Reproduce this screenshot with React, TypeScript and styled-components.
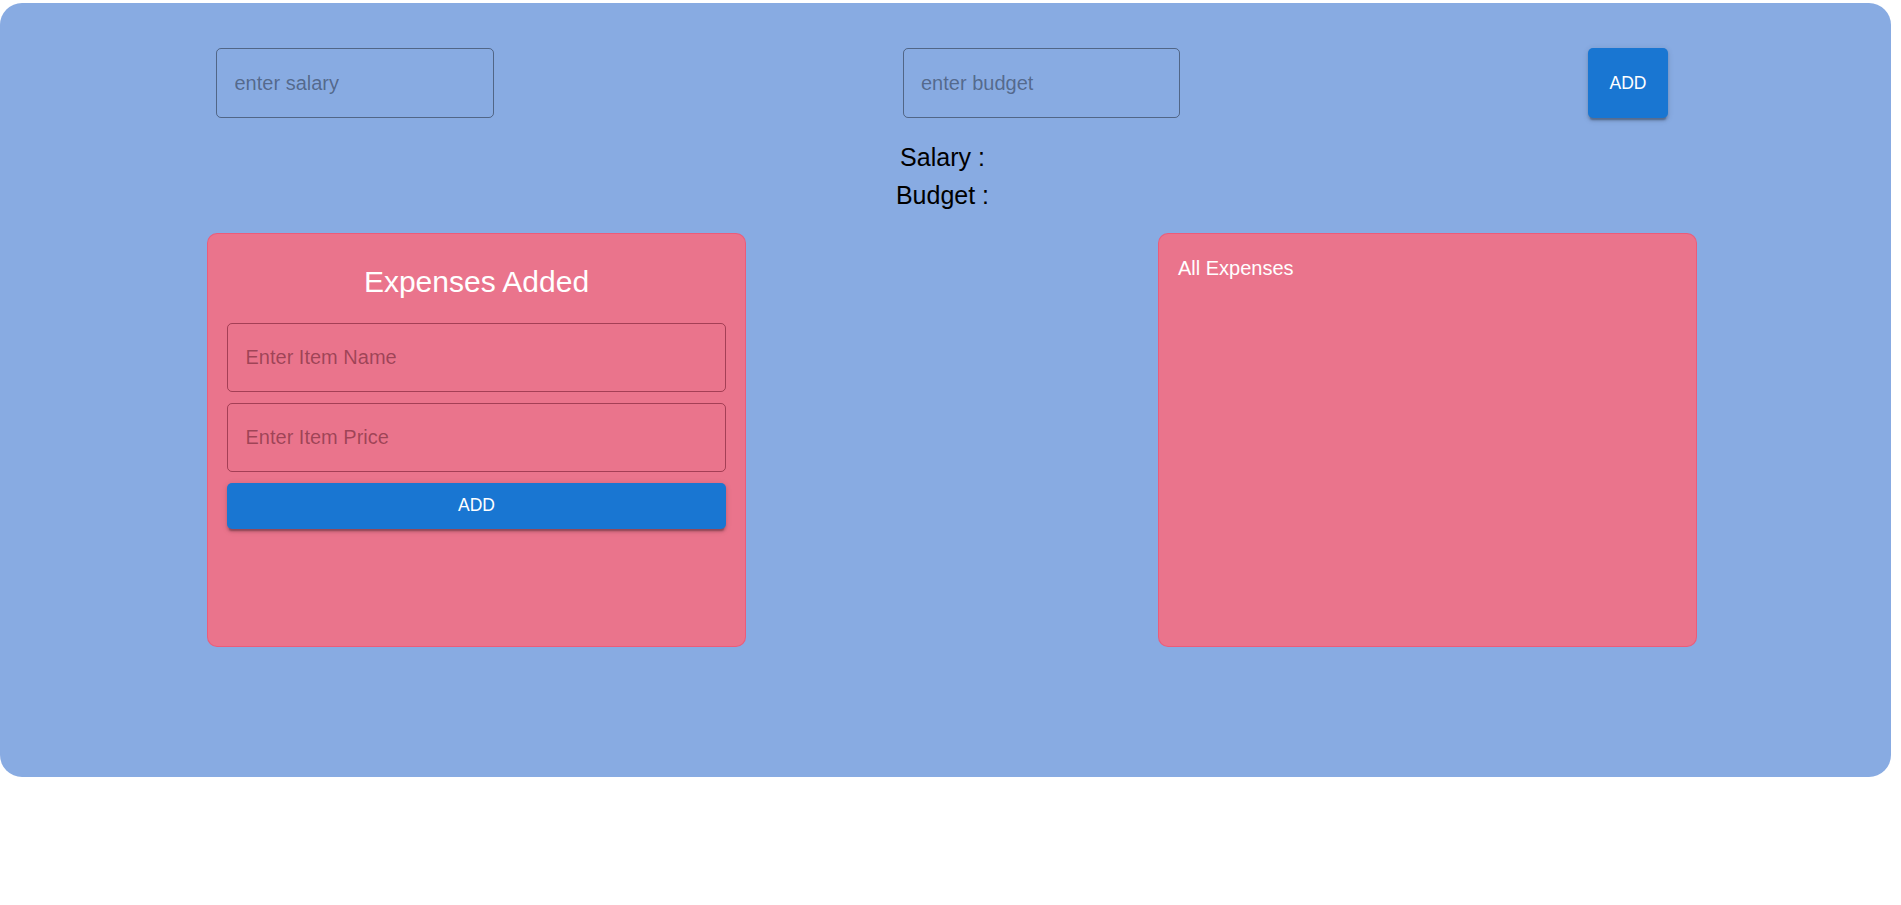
import React from "react";
import styled, { createGlobalStyle } from "styled-components";

const GlobalStyle = createGlobalStyle`
  html, body {
    margin: 0;
    padding: 0;
    background: #ffffff;
    font-family: "Liberation Sans", Arial, sans-serif;
  }
  * { box-sizing: border-box; }
`;

const Board = styled.div`
  margin-top: 3px;
  width: 1891px;
  height: 774px;
  background: #88abe2;
  border-radius: 22px;
  padding: 45px 0 0 0;
  display: flex;
  flex-direction: column;
`;

const TopRow = styled.div`
  display: grid;
  grid-template-columns: 278px 277px 80px;
  column-gap: 408.5px;
  padding-left: 216px;
  height: 70px;
`;

const Field = styled.input<{ $tone?: "blue" | "pink" }>`
  width: 100%;
  height: 100%;
  padding: 0 17.5px;
  font-family: "Liberation Sans", Arial, sans-serif;
  font-size: 20px;
  color: rgba(0, 0, 0, 0.87);
  background: transparent;
  border: 1px solid ${(p) => (p.$tone === "pink" ? "rgba(80, 0, 20, 0.45)" : "rgba(0, 0, 0, 0.4)")};
  border-radius: 5px;
  outline: none;
  &::placeholder {
    color: ${(p) => (p.$tone === "pink" ? "rgba(50, 0, 10, 0.42)" : "rgba(0, 0, 0, 0.4)")};
  }
`;

const AddButton = styled.button<{ $wide?: boolean }>`
  min-width: 80px;
  width: ${(p) => (p.$wide ? "100%" : "auto")};
  height: ${(p) => (p.$wide ? "46px" : "100%")};
  padding: 7.5px 20px;
  border: none;
  border-radius: 5px;
  background: #1976d2;
  color: #ffffff;
  font-family: "Liberation Sans", Arial, sans-serif;
  font-weight: 400;
  font-size: 17.5px;
  text-transform: uppercase;
  cursor: pointer;
  box-shadow: 0px 3.75px 1.25px -2.5px rgba(0, 0, 0, 0.2),
    0px 2.5px 2.5px 0px rgba(0, 0, 0, 0.14),
    0px 1.25px 6.25px 0px rgba(0, 0, 0, 0.12);
`;

const Summary = styled.div`
  margin-top: 25px;
  display: flex;
  flex-direction: column;
  align-items: center;
  gap: 9px;
  padding-right: 6px;
`;

const SummaryLine = styled.div`
  font-family: "Liberation Sans", Arial, sans-serif;
  font-size: 25px;
  line-height: 28.75px;
  color: #000000;
`;

const CardRow = styled.div`
  margin-top: 23.5px;
  display: grid;
  grid-template-columns: 539px 539px;
  column-gap: 412px;
  padding-left: 207px;
`;

const Card = styled.section<{ $align?: "center" | "left" }>`
  height: 414px;
  background: #ea748c;
  border: 1px solid rgba(235, 90, 120, 0.9);
  border-radius: 10px;
  padding: 20px 19px;
  display: flex;
  flex-direction: column;
  color: #ffffff;
  text-align: ${(p) => (p.$align === "center" ? "center" : "left")};
`;

const CardTitle = styled.h2`
  margin: 11px 0 23px;
  font-family: "Liberation Sans", Arial, sans-serif;
  font-weight: 400;
  font-size: 30px;
  line-height: 34.5px;
  color: #ffffff;
`;

const ListTitle = styled.div`
  margin-top: 3px;
  font-family: "Liberation Sans", Arial, sans-serif;
  font-size: 20px;
  line-height: 23px;
  color: #ffffff;
`;

const FormStack = styled.div`
  display: flex;
  flex-direction: column;
  gap: 11px;
`;

const FieldBox = styled.div`
  height: 69px;
`;

export default function App() {
  return (
    <>
      <GlobalStyle />
      <Board>
        <TopRow>
          <Field placeholder="enter salary" />
          <Field placeholder="enter budget" />
          <AddButton>Add</AddButton>
        </TopRow>
        <Summary>
          <SummaryLine>Salary :</SummaryLine>
          <SummaryLine>Budget :</SummaryLine>
        </Summary>
        <CardRow>
          <Card $align="center">
            <CardTitle>Expenses Added</CardTitle>
            <FormStack>
              <FieldBox>
                <Field $tone="pink" placeholder="Enter Item Name" />
              </FieldBox>
              <FieldBox>
                <Field $tone="pink" placeholder="Enter Item Price" />
              </FieldBox>
              <AddButton $wide>Add</AddButton>
            </FormStack>
          </Card>
          <Card>
            <ListTitle>All Expenses</ListTitle>
          </Card>
        </CardRow>
      </Board>
    </>
  );
}
